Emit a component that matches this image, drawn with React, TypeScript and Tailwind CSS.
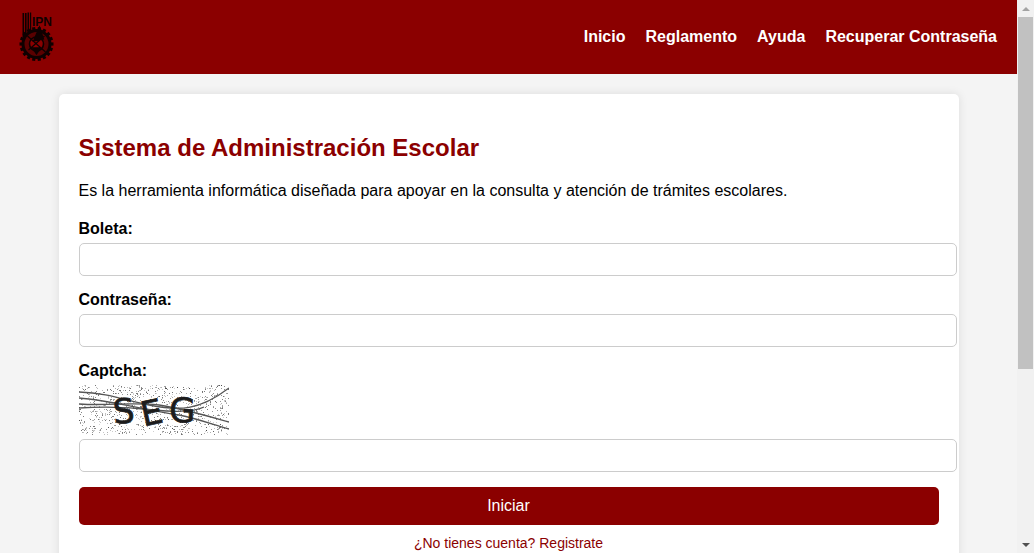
const dots: { x: number; y: number; o: number }[] = [];
let seed = 12345;
const rnd = () => {
  seed = (seed * 16807) % 2147483647;
  return seed / 2147483647;
};
for (let i = 0; i < 1000; i++) {
  dots.push({ x: Math.floor(rnd() * 150), y: Math.floor(rnd() * 50), o: 0.2 + rnd() * 0.5 });
}

function Captcha() {
  return (
    <svg width="150" height="50" viewBox="0 0 150 50" className="block">
      <rect width="150" height="50" fill="#ffffff" />
      {dots.map((d, i) => (
        <rect key={i} x={d.x} y={d.y} width="1" height="1" fill="#333333" opacity={d.o} />
      ))}
      <g fill="none" stroke="#555555" strokeWidth="1.3">
        <path d="M0 7 C30 8 45 15 70 20 C100 26 120 26 150 3" />
        <path d="M0 13 C30 15 60 24 100 30 C120 34 135 40 150 44" />
        <path d="M0 19 C30 21 50 17 80 20 C105 24 125 30 150 37" />
        <path d="M0 23 C30 21 50 22 75 25 C95 27 115 27 125 22" />
      </g>
      <g fill="#1c1c1c" stroke="#1c1c1c" strokeWidth="0.7" fontFamily="'DejaVu Sans', sans-serif" fontSize="34">
        <text x="34" y="38" transform="rotate(-4 46 28)">S</text>
        <text x="62" y="39" transform="rotate(-12 75 28)">E</text>
        <text x="90" y="37" transform="rotate(2 100 28)">G</text>
      </g>
    </svg>
  );
}

function Logo() {
  const teeth = Array.from({ length: 18 }, (_, i) => i * 20 - 10);
  return (
    <svg width="36" height="52" viewBox="0 0 36 52" className="block -ml-[1px]">
      <g fill="#0f0000">
        <rect x="3.5" y="2" width="1.6" height="24" />
        <rect x="6" y="2" width="1.6" height="24" />
        <rect x="8.5" y="1.5" width="1.6" height="24" />
        <rect x="11" y="1.5" width="1.2" height="24" />
        <text x="13" y="14.5" fontFamily="'Liberation Sans', sans-serif" fontWeight="700" fontSize="13" textLength="20" lengthAdjust="spacingAndGlyphs">IPN</text>
      </g>
      <g transform="translate(17.5 33)">
        {teeth.map((a) => (
          <rect key={a} x="-1.6" y="-17" width="3.2" height="4" fill="#0f0000" transform={`rotate(${a})`} />
        ))}
        <circle r="13.5" fill="#5a0000" stroke="#0f0000" strokeWidth="3" />
        <circle r="7" fill="#8b0000" stroke="#0f0000" strokeWidth="1.6" />
        <path d="M-9 -8 L9 8 M-8 6 L8 -8 M3 -17 L-3 -3 L7 -5 Z M-4 4 L4 4 L0 10 Z" stroke="#0f0000" strokeWidth="1.3" fill="#0f0000" />
      </g>
    </svg>
  );
}

function Field({ label }: { label: string }) {
  return (
    <div className="mb-[15px]">
      <label className="block font-bold text-[16px] leading-[18px] text-black mb-[5px]">{label}</label>
      <input className="block w-[878px] h-[33px] bg-white border border-[#cccccc] rounded-[5px]" />
    </div>
  );
}

export default function App() {
  return (
    <div className="flex h-[553px] overflow-hidden bg-[#f4f4f4] font-['Liberation_Sans',Arial,sans-serif]">
      <div className="flex-1 min-w-0">
        <header className="h-[74px] bg-[#8b0000] flex items-center justify-between pl-[20px] pr-[20px]">
          <Logo />
          <nav className="flex gap-[20px] text-white font-bold text-[16px]">
            <a>Inicio</a>
            <a>Reglamento</a>
            <a>Ayuda</a>
            <a>Recuperar Contraseña</a>
          </nav>
        </header>
        <main className="w-[900px] mx-auto mt-[20px] bg-white rounded-[5px] shadow-[0_0_10px_rgba(0,0,0,0.1)] p-[20px] pt-[40px] h-[500px]">
          <h2 className="text-[#8b0000] font-bold text-[24px] leading-[28px]">Sistema de Administración Escolar</h2>
          <p className="text-[16px] leading-[18px] mt-[20px] mb-[20px] text-black">Es la herramienta informática diseñada para apoyar en la consulta y atención de trámites escolares.</p>
          <Field label="Boleta:" />
          <Field label="Contraseña:" />
          <div>
            <label className="block font-bold text-[16px] leading-[18px] mb-[5px] text-black">Captcha:</label>
            <Captcha />
            <input className="block w-[878px] h-[33px] mt-[4px] bg-white border border-[#cccccc] rounded-[5px]" />
          </div>
          <button className="block w-[860px] h-[38px] mt-[15px] bg-[#8b0000] text-white text-[16px] rounded-[5px]">Iniciar</button>
          <p className="text-center text-[14px] leading-[16px] mt-[10px] text-[#8b0000]">¿No tienes cuenta? Registrate</p>
        </main>
      </div>
      <div className="w-[17px] bg-[#f1f1f1] flex flex-col items-center shrink-0">
        <div className="h-[17px] flex items-center justify-center">
          <div className="w-0 h-0 border-x-[4px] border-x-transparent border-b-[4px] border-b-[#a3a3a3]" />
        </div>
        <div className="w-[15px] h-[352px] bg-[#c1c1c1]" />
        <div className="flex-1" />
        <div className="h-[17px] flex items-center justify-center">
          <div className="w-0 h-0 border-x-[4px] border-x-transparent border-t-[4px] border-t-[#505050]" />
        </div>
      </div>
    </div>
  );
}
